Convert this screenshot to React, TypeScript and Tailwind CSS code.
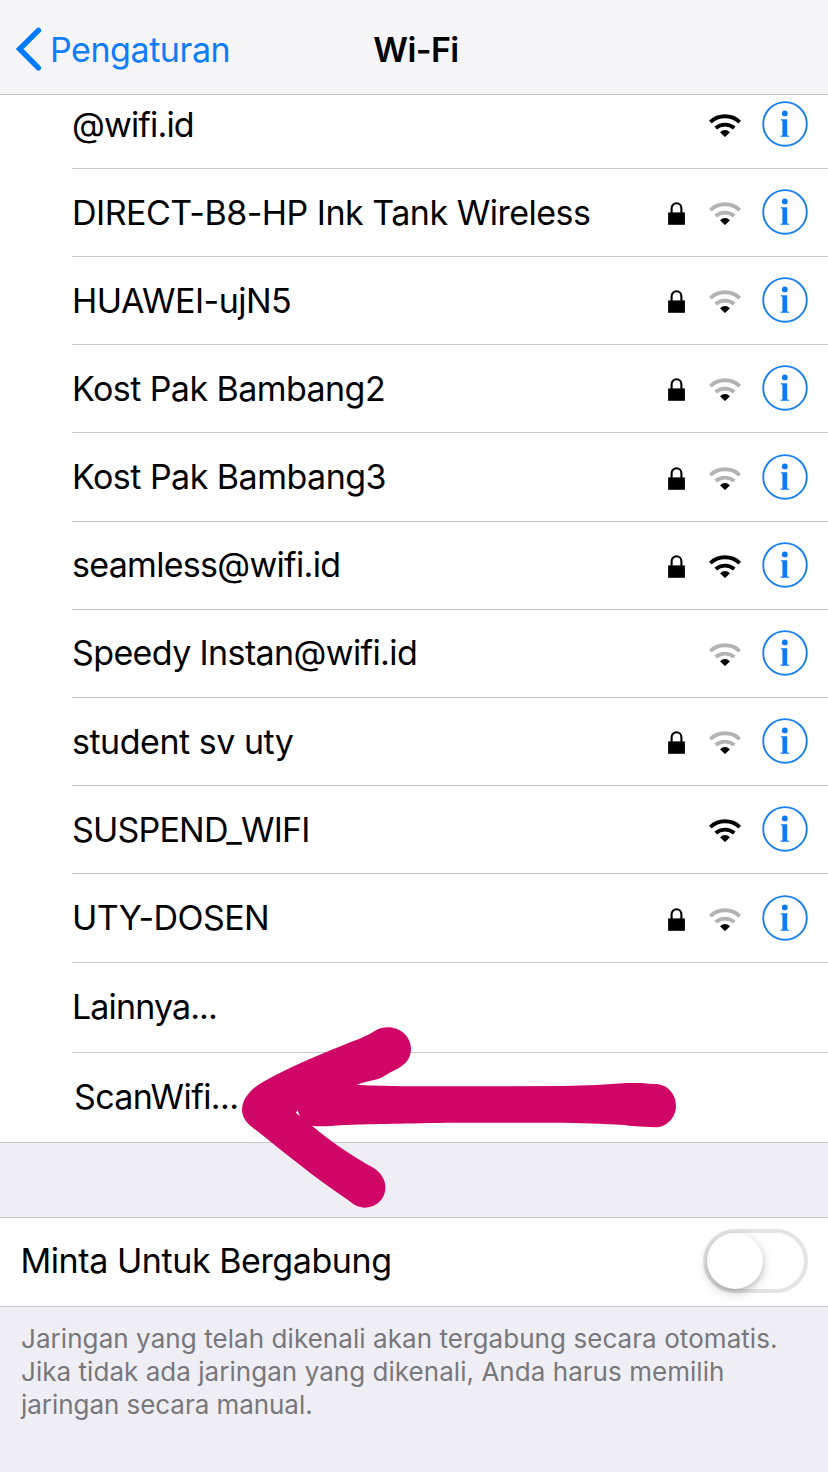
import React from "react";

type Network = { name: string; spacing: string; locked?: boolean; strong?: boolean };

const networks: Network[] = [
  { name: "@wifi.id", spacing: "tracking-[-0.85px]", strong: true },
  { name: "DIRECT-B8-HP Ink Tank Wireless", spacing: "tracking-[-0.5px]", locked: true },
  { name: "HUAWEI-ujN5", spacing: "tracking-[-0.5px]", locked: true },
  { name: "Kost Pak Bambang2", spacing: "tracking-[-0.56px]", locked: true },
  { name: "Kost Pak Bambang3", spacing: "tracking-[-0.52px]", locked: true },
  { name: "seamless@wifi.id", spacing: "tracking-[-0.7px]", locked: true, strong: true },
  { name: "Speedy Instan@wifi.id", spacing: "tracking-[-0.62px]" },
  { name: "student sv uty", spacing: "tracking-[-0.48px]", locked: true },
  { name: "SUSPEND_WIFI", spacing: "tracking-[-0.8px]", strong: true },
  { name: "UTY-DOSEN", spacing: "tracking-[-0.58px]", locked: true },
];

function LockIcon() {
  return (
    <svg className="mt-[2px] mr-[24.7px] h-[23px] w-[17px]" viewBox="0 0 17 23">
      <path d="M3.6 12V6.2a4.9 5 0 0 1 9.8 0V12" fill="none" stroke="#000" strokeWidth="2.1" />
      <path d="M0.1 10.4h16.8v12.4H0.1z" fill="#000" />
    </svg>
  );
}

function SignalIcon({ strong }: { strong?: boolean }) {
  const arc = strong ? "#000" : "#b3b3b3";
  return (
    <svg className="mt-[2px] mr-[20.6px] h-[23px] w-[32px]" viewBox="0 0 32 23">
      <path d="M1.3 8.1A21.5 21.5 0 0 1 30.7 8.1" fill="none" stroke={arc} strokeWidth="3.9" />
      <path d="M6.7 14A14.4 14.4 0 0 1 25.3 14" fill="none" stroke={arc} strokeWidth="3.9" />
      <path d="M11 18.3Q16 13.8 21 18.3L16 23.1z" fill="#000" />
    </svg>
  );
}

function InfoIcon() {
  return (
    <svg className="-mt-px size-[46px]" viewBox="0 0 46 46">
      <circle cx="23" cy="22.9" r="21.8" fill="none" stroke="#1a7ff0" strokeWidth="1.9" />
      <circle cx="22.8" cy="12.4" r="2.9" fill="#0f7af2" />
      <path d="M18.8 18.2h6.4v16.2l2 .4v1h-8.7v-1l1.9-.4V19.7l-1.6-.4z" fill="#0f7af2" />
    </svg>
  );
}

function NetworkRow({ network, first }: { network: Network; first: boolean }) {
  return (
    <li
      className={
        first
          ? "flex h-[74px] items-end overflow-hidden pl-[72px]"
          : "flex h-[88.2px] pl-[72px]"
      }
    >
      <div className="flex h-[88px] flex-1 items-center border-b border-[#c8c7cc] pr-[20px]">
        <span className={`flex-1 whitespace-nowrap ${network.spacing}`}>{network.name}</span>
        {network.locked && <LockIcon />}
        <SignalIcon strong={network.strong} />
        <InfoIcon />
      </div>
    </li>
  );
}

function PointerArrow() {
  return (
    <svg className="pointer-events-none absolute top-[1010px] left-[220px] h-[210px] w-[480px]" viewBox="0 0 1440 630">
      <path
        fill="#d10768"
        fillRule="evenodd"
        d="M66 298C68 262 95 235 130 215C220 165 320 125 400 93C430 82 450 72 465 62C515 35 572 65 573 117C573 150 550 168 525 180C500 192 490 202 475 207C455 212 430 216 410 224C480 228 560 229 700 229L1030 228C1100 227 1160 224 1220 219L1265 219Q1285 222 1305 222C1340 222 1368 250 1368 287C1368 322 1340 352 1305 352C1260 350 1230 348 1210 345C1150 341 1080 338 1000 338L680 338C540 341 440 342 370 345C330 348 300 351 276 347C330 393 400 440 460 473C485 490 497 510 496 535C495 570 465 594 432 593C412 592 400 583 385 571C340 540 290 505 240 465C190 427 140 385 95 350C75 335 66 318 66 298ZM227 308L233 301L239 318Z"
      />
    </svg>
  );
}

export default function App() {
  return (
    <div className="relative flex h-[1472px] w-[828px] flex-col overflow-hidden bg-[#efeef5] font-['Inter','Liberation_Sans',sans-serif] text-[34px] leading-[40px] text-black">
      <header className="grid h-[95px] shrink-0 grid-cols-[1fr_auto_1fr] items-center border-b border-[#c4c4ca] bg-[#f5f5f8] pt-[5px] pr-[11px] pl-[15px]">
        <a className="flex items-center text-[#0f7cf8]">
          <svg className="-mt-[2px] h-[44px] w-[27px]" viewBox="0 0 27 44">
            <path d="M23.4 3.4L4.6 22L23.4 40.8" fill="none" stroke="#007aff" strokeWidth="5.4" strokeLinecap="round" />
          </svg>
          <span className="ml-[8px] tracking-[-0.44px]">Pengaturan</span>
        </a>
        <h1 className="font-semibold tracking-[-0.6px]">Wi-Fi</h1>
      </header>

      <ul className="shrink-0 bg-white">
        {networks.map((network, index) => (
          <NetworkRow key={network.name} network={network} first={index === 0} />
        ))}
        <li className="flex h-[90px] pl-[72px]">
          <div className="flex flex-1 items-center border-b border-[#c8c7cc] tracking-[-0.87px]">Lainnya...</div>
        </li>
        <li className="flex h-[90px] items-center border-b border-[#c8c7cc] pb-px pl-[74px] tracking-[-0.6px]">
          ScanWifi...
        </li>
      </ul>

      <section className="mt-[74px] flex h-[90px] shrink-0 items-center justify-between border-y border-[#c8c7cc] bg-white pr-[20px] pb-px pl-[20.5px]">
        <span className="tracking-[-0.42px]">Minta Untuk Bergabung</span>
        <button className="-mt-px flex h-[64px] w-[105px] items-center rounded-full border-4 border-[#e4e4e4] bg-white">
          <span className="size-[56px] rounded-full bg-white shadow-[0_4px_12px_rgba(0,0,0,0.2),0_2px_4px_rgba(0,0,0,0.13)]" />
        </button>
      </section>

      <p className="pt-[15px] pl-[21px] text-[26px] leading-[33px] whitespace-nowrap text-[#77777c]">
        <span className="block tracking-[0.066px]">Jaringan yang telah dikenali akan tergabung secara otomatis.</span>
        <span className="block tracking-[0.042px]">Jika tidak ada jaringan yang dikenali, Anda harus memilih</span>
        <span className="block tracking-[-0.05px]">jaringan secara manual.</span>
      </p>

      <PointerArrow />
    </div>
  );
}
